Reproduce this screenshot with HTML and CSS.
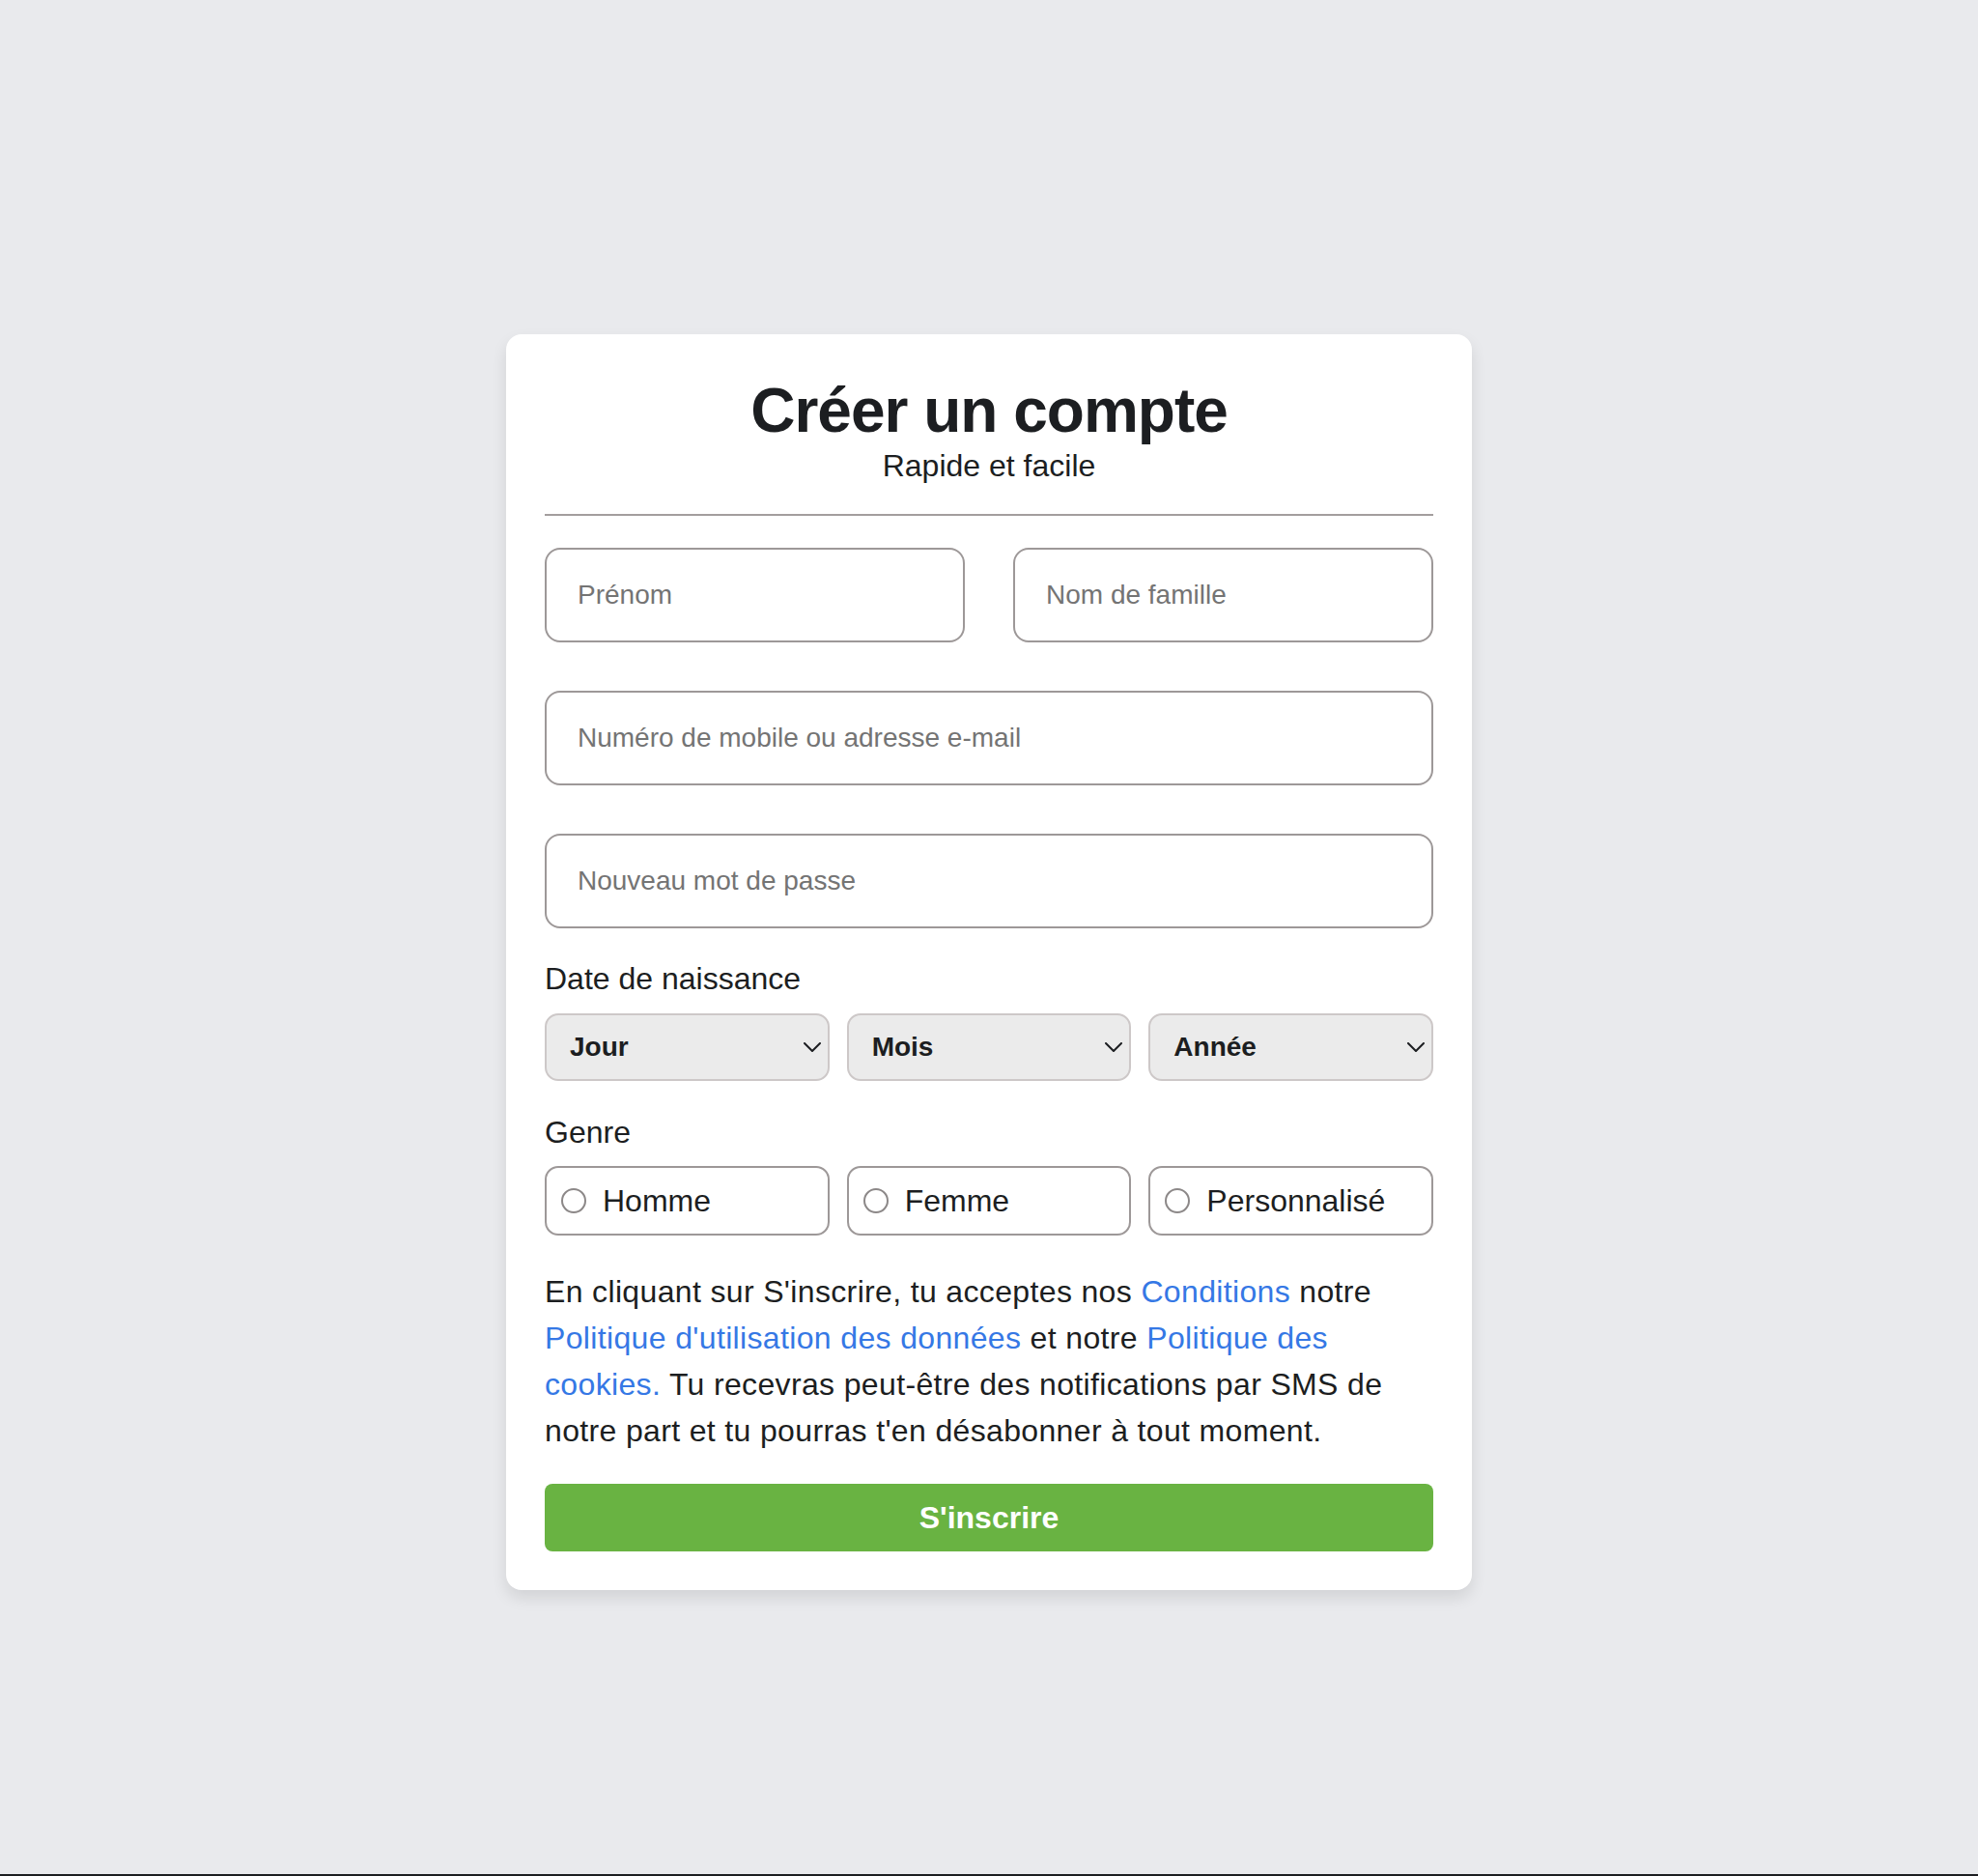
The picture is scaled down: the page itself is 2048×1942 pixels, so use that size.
FILE: index.html
```html
<!DOCTYPE html>
<html lang="fr">
<head>
<meta charset="utf-8">
<title>Créer un compte</title>
<link rel="stylesheet" href="styles.css">
</head>
<body>
<div class="page">
  <form class="card">
    <h1 class="title">Créer un compte</h1>
    <p class="subtitle">Rapide et facile</p>
    <hr class="sep">
    <div class="name-row">
      <input class="field" type="text" placeholder="Prénom">
      <input class="field" type="text" placeholder="Nom de famille">
    </div>
    <input class="field field-full" type="text" placeholder="Numéro de mobile ou adresse e-mail">
    <input class="field field-full" type="password" placeholder="Nouveau mot de passe">

    <div class="label label-date">Date de naissance</div>
    <div class="triple">
      <div class="select" role="combobox" tabindex="0">
        <span class="select-text">Jour</span>
        <svg class="chev" width="18" height="10" viewBox="0 0 18 10"><path d="M1 1 L9 9 L17 1" fill="none" stroke="#1c1e21" stroke-width="2" stroke-linecap="round" stroke-linejoin="round"/></svg>
      </div>
      <div class="select" role="combobox" tabindex="0">
        <span class="select-text">Mois</span>
        <svg class="chev" width="18" height="10" viewBox="0 0 18 10"><path d="M1 1 L9 9 L17 1" fill="none" stroke="#1c1e21" stroke-width="2" stroke-linecap="round" stroke-linejoin="round"/></svg>
      </div>
      <div class="select" role="combobox" tabindex="0">
        <span class="select-text">Année</span>
        <svg class="chev" width="18" height="10" viewBox="0 0 18 10"><path d="M1 1 L9 9 L17 1" fill="none" stroke="#1c1e21" stroke-width="2" stroke-linecap="round" stroke-linejoin="round"/></svg>
      </div>
    </div>

    <div class="label label-genre">Genre</div>
    <div class="triple">
      <label class="radio-box"><input class="radio" type="radio" name="genre"><span>Homme</span></label>
      <label class="radio-box"><input class="radio" type="radio" name="genre"><span>Femme</span></label>
      <label class="radio-box"><input class="radio" type="radio" name="genre"><span>Personnalisé</span></label>
    </div>

    <p class="terms"><span>En cliquant sur S'inscrire, tu acceptes nos</span> <a href="#">Conditions</a> <span>notre</span> <a href="#">Politique d'utilisation des données</a> <span>et notre</span> <a href="#">Politique des</a> <a href="#">cookies.</a> <span>Tu recevras peut-être des notifications par SMS de</span> <span>notre part et tu pourras t'en désabonner à tout moment.</span></p>

    <button class="submit" type="button">S'inscrire</button>
  </form>
</div>
</body>
</html>
```

FILE: styles.css
```css
html {
  background: #1c1e21;
}
body {
  margin: 0;
  font-family: "Liberation Sans", Arial, sans-serif;
  color: #1c1e21;
}
.page {
  min-height: 1940px;
  background: #e9eaed;
  display: flex;
  flex-direction: column;
  align-items: center;
  padding-top: 346px;
  box-sizing: border-box;
}
.card {
  width: 1000px;
  box-sizing: border-box;
  background: #ffffff;
  border-radius: 16px;
  padding: 40px;
  box-shadow: 0 8px 16px rgba(0, 0, 0, 0.1);
  display: flex;
  flex-direction: column;
}
.title {
  margin: 0;
  font-size: 64px;
  font-weight: 700;
  line-height: 78px;
  letter-spacing: -1px;
  text-align: center;
  color: #1c1e21;
}
.subtitle {
  margin: 0;
  font-size: 32px;
  line-height: 36px;
  text-align: center;
}
.sep {
  margin: 32px 0 33px;
  border: 0;
  height: 2px;
  background: #a39e9e;
}
.name-row {
  display: grid;
  grid-template-columns: 1fr 1fr;
  gap: 50px;
}
.field {
  display: block;
  box-sizing: border-box;
  width: 100%;
  height: 98px;
  border: 2px solid #9d9898;
  border-radius: 16px;
  padding: 0 32px;
  font-family: "Liberation Sans", Arial, sans-serif;
  font-size: 28px;
  color: #1c1e21;
  background: #fff;
  outline: none;
}
.field::placeholder {
  color: #747474;
}
.field-full {
  margin-top: 50px;
}
.label {
  font-size: 32px;
  line-height: 36px;
}
.label-date {
  margin: 34px 0 18px;
}
.label-genre {
  margin: 35px 0 17px;
}
.triple {
  display: grid;
  grid-template-columns: 1fr 1fr 1fr;
  gap: 18px;
}
.select {
  box-sizing: border-box;
  height: 70px;
  border: 2px solid #cdc8c8;
  border-radius: 14px;
  background: #ebebeb;
  padding: 0 7px 0 24px;
  display: flex;
  align-items: center;
  justify-content: space-between;
  font-size: 28px;
  font-weight: 700;
  color: #1c1e21;
}
.chev {
  flex: none;
}
.radio-box {
  box-sizing: border-box;
  height: 72px;
  border: 2px solid #9d9898;
  border-radius: 14px;
  display: flex;
  align-items: center;
  gap: 17px;
  padding-left: 15px;
  font-size: 32px;
  color: #1c1e21;
}
.radio {
  appearance: none;
  -webkit-appearance: none;
  margin: 0;
  width: 26px;
  height: 26px;
  border: 2px solid #8c8888;
  border-radius: 50%;
  box-sizing: border-box;
  flex: none;
}
.terms {
  margin: 34px 0 0;
  font-size: 32px;
  line-height: 48px;
  letter-spacing: 0.35px;
}
.terms a {
  color: #3578e5;
  text-decoration: none;
}
.submit {
  margin-top: 31px;
  height: 70px;
  border: 0;
  border-radius: 8px;
  background: #69b342;
  color: #fff;
  font-family: "Liberation Sans", Arial, sans-serif;
  font-size: 32px;
  font-weight: 700;
}
```
